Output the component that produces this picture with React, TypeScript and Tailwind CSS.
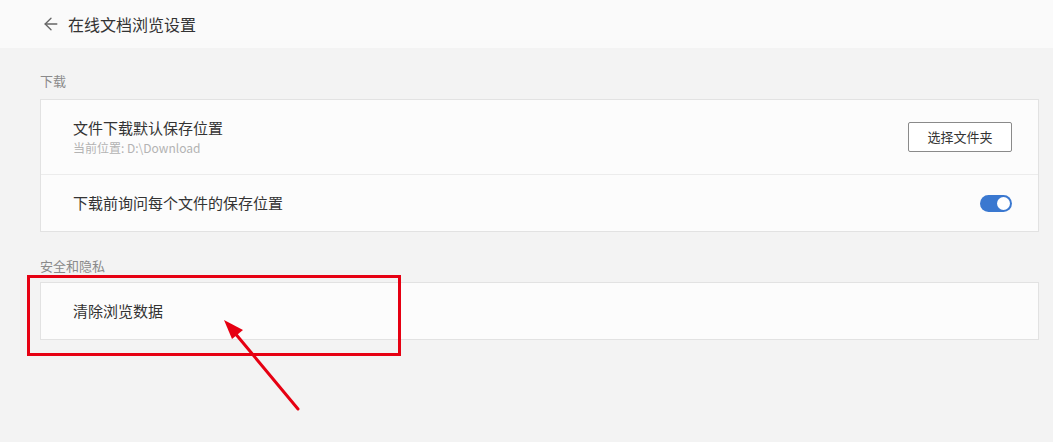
import { ArrowLeft } from 'lucide-react'

const font = { fontFamily: '"Noto Sans CJK SC", "Microsoft YaHei", sans-serif' }

function Toggle() {
  return (
    <div className="w-[32px] h-[17px] rounded-full bg-[#3a78d0] flex items-center justify-end pr-[2px]">
      <div className="w-[13px] h-[13px] rounded-full bg-white" />
    </div>
  )
}

export default function App() {
  return (
    <div
      className="relative w-[1053px] h-[442px] overflow-hidden bg-[#f3f3f3] text-[#333]"
      style={font}
    >
      <div className="h-[48px] bg-[#fafafa] flex items-center pl-[41px] gap-[7px]">
        <ArrowLeft className="w-[20px] h-[20px] text-[#666]" strokeWidth={1.6} />
        <span className="text-[16px] text-[#333]">在线文档浏览设置</span>
      </div>

      <div className="pl-[40px] pr-[14px]">
        <div className="pt-[23px] h-[51px] text-[13px] text-[#8a8a8a] leading-[20px]">下载</div>
        <div className="bg-[#fcfcfc] border border-[#e2e2e2]">
          <div className="h-[75px] flex items-center justify-between pl-[32px] pr-[26px] border-b border-[#ececec]">
            <div className="flex flex-col">
              <span className="text-[15px] leading-[22px]">文件下载默认保存位置</span>
              <span className="text-[12px] leading-[18px] text-[#b3b3b3]">当前位置: D:\Download</span>
            </div>
            <button className="w-[104px] h-[30px] border border-[#8a8a8a] rounded-[2px] bg-white text-[13px] text-[#333]">
              选择文件夹
            </button>
          </div>
          <div className="h-[56px] flex items-center justify-between pl-[32px] pr-[26px]">
            <span className="text-[15px]">下载前询问每个文件的保存位置</span>
            <Toggle />
          </div>
        </div>

        <div className="pt-[24px] h-[50px] text-[13px] text-[#8a8a8a] leading-[20px]">安全和隐私</div>
        <div className="bg-[#fcfcfc] border border-[#e2e2e2] h-[58px] flex items-center pl-[32px]">
          <span className="text-[15px]">清除浏览数据</span>
        </div>
      </div>

      {/* annotation overlay */}
      <div className="absolute left-[27px] top-[275px] w-[374px] h-[81px] border-[3px] border-[#e60012]" />
      <svg className="absolute left-0 top-0" width="1053" height="442" viewBox="0 0 1053 442">
        <line x1="298" y1="409" x2="234" y2="332" stroke="#e60012" strokeWidth="3" strokeLinecap="round" />
        <polygon points="224,320 243,330 232,339" fill="#e60012" />
      </svg>
    </div>
  )
}
